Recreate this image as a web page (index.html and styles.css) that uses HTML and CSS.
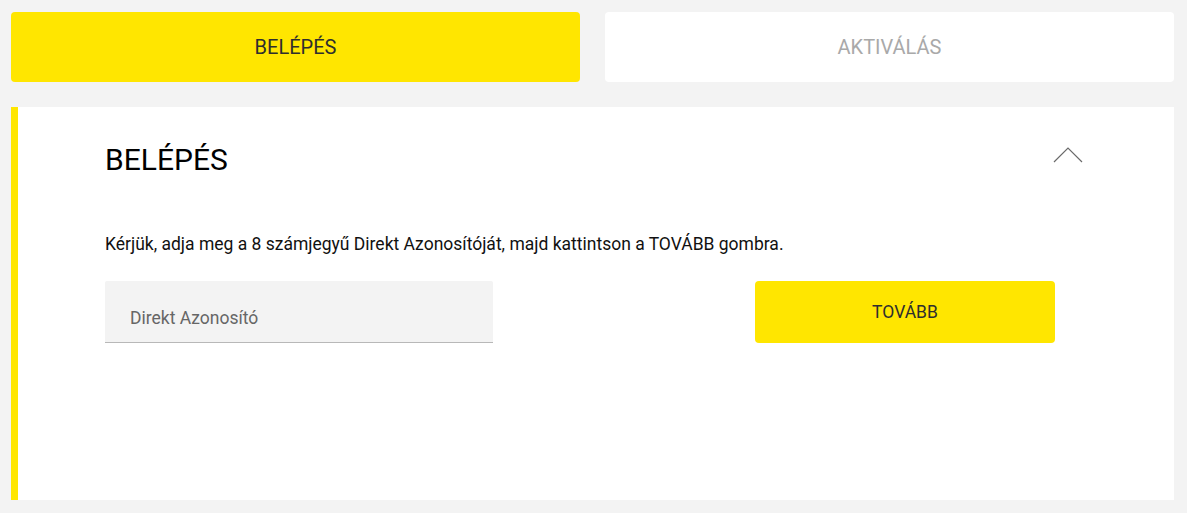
FILE: index.html
```html
<!DOCTYPE html>
<html lang="hu">
<head>
<meta charset="utf-8">
<link rel="stylesheet" href="styles.css">
</head>
<body>
<div class="page">
  <nav class="tabs">
    <div class="tab tab-active">BELÉPÉS</div>
    <div class="tab tab-inactive">AKTIVÁLÁS</div>
  </nav>
  <section class="panel">
    <div class="panel-head">
      <h1 class="panel-title">BELÉPÉS</h1>
      <svg class="chevron" width="30" height="16" viewBox="0 0 30 16"><polyline points="1,15 15,1 29,15" fill="none" stroke="#6a6a6a" stroke-width="1.2"/></svg>
    </div>
    <p class="intro">Kérjük, adja meg a 8 számjegyű Direkt Azonosítóját, majd kattintson a TOVÁBB gombra.</p>
    <div class="form-row">
      <div class="field"><span class="placeholder">Direkt Azonosító</span></div>
      <div class="btn">TOVÁBB</div>
    </div>
  </section>
</div>
</body>
</html>
```
FILE: styles.css
```css
html, body {
  margin: 0;
  padding: 0;
  background: #f3f3f3;
  font-family: Roboto, "Noto Sans", sans-serif;
}
.page {
  padding: 12px 13px 0 11px;
}
.tabs {
  display: grid;
  grid-template-columns: 1fr 1fr;
  column-gap: 25px;
}
.tab {
  height: 70px;
  border-radius: 4px;
  display: flex;
  align-items: center;
  justify-content: center;
  font-size: 20px;
}
.tab-active {
  background: #ffe600;
  color: #2e2e2e;
}
.tab-inactive {
  background: #ffffff;
  color: #a9a9a9;
}
.panel {
  margin-top: 25px;
  height: 393px;
  box-sizing: border-box;
  background: #fff;
  border-left: 7px solid #ffe600;
  padding: 0 91px 0 87px;
}
.panel-head {
  display: flex;
  justify-content: space-between;
  align-items: flex-start;
  padding-top: 38px;
}
.panel-title {
  margin: 0;
  font-weight: 400;
  font-size: 30px;
  line-height: 30px;
  color: #000;
}
.chevron {
  margin-top: 2px;
  display: block;
}
.intro {
  margin: 58px 0 0;
  font-size: 17.5px;
  line-height: 22px;
  color: #111;
}
.form-row {
  display: flex;
  justify-content: space-between;
  margin-top: 26px;
  padding-right: 28px;
}
.field {
  width: 388px;
  height: 62px;
  box-sizing: border-box;
  background: #f3f3f3;
  border-bottom: 1px solid #b8b8b8;
  border-radius: 2px 2px 0 0;
  display: flex;
  align-items: center;
  padding: 12px 0 0 25px;
}
.placeholder {
  font-size: 17.5px;
  color: #666;
}
.btn {
  width: 300px;
  height: 62px;
  background: #ffe600;
  border-radius: 4px;
  display: flex;
  align-items: center;
  justify-content: center;
  font-size: 17.5px;
  color: #2e2e2e;
}
```
